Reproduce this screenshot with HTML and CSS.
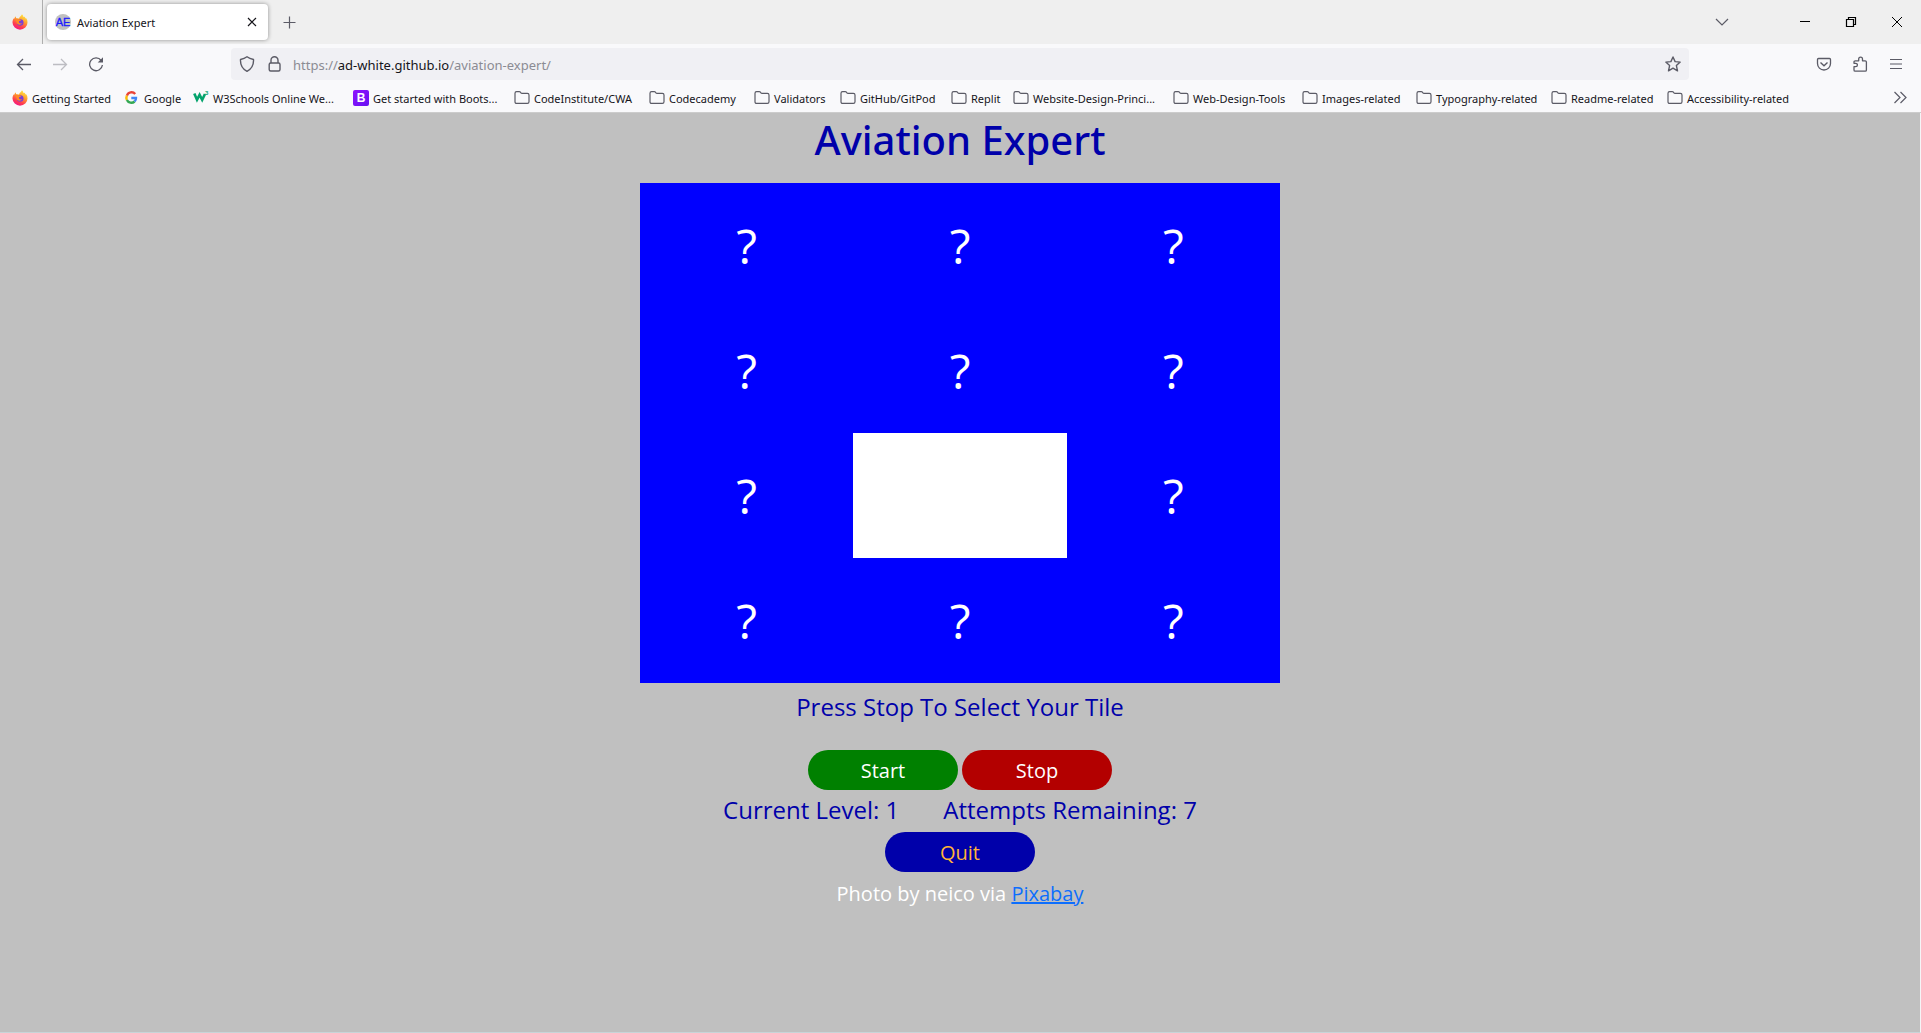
FILE: index.html
```html
<!DOCTYPE html>
<html lang="en">
<head>
<meta charset="utf-8">
<title>Aviation Expert</title>
<link rel="stylesheet" href="styles.css">
</head>
<body>
<svg class="defs" aria-hidden="true">
  <defs>
    <linearGradient id="flame" x1="0.8" y1="0" x2="0.3" y2="1">
      <stop offset="0" stop-color="#fff14a"/><stop offset="0.4" stop-color="#ffa02c"/><stop offset="0.75" stop-color="#ff3a50"/><stop offset="1" stop-color="#f0148c"/>
    </linearGradient>
    <linearGradient id="boot" x1="0" y1="0" x2="1" y2="1">
      <stop offset="0" stop-color="#9013fe"/><stop offset="1" stop-color="#6610f2"/>
    </linearGradient>
    <symbol id="firefox" viewBox="0 0 16 16">
      <path d="M10 0.3c.9.9 1.300 1.700 1.500 2.700l1.200-.3.800 1.600 1 .2c.7 1.200 1 2.500 1 3.900A7.500 7.300 0 0 1 8 15.700 7.500 7.300 0 0 1 .5 8.500c0-1.600.4-3 1.300-4.300L2 5.100 3.500 2.300 4.200 4.200 7 4.400C7.800 2.200 9.300 2.100 10 .3z" fill="url(#flame)"/>
      <circle cx="8.200" cy="8.500" r="3.300" fill="#7a3fd6"/>
      <path d="M3.300 5.200c1.500-.7 3-.5 4.300.4l1.600.3c-.4 1-1.400 1-2.200 1.300-.4 1.800 1 2.600 3.200 2-1.500 2.300-5.300 1.800-5.700-1.200z" fill="#ff8a25"/>
    </symbol>
    <symbol id="folder" viewBox="0 0 16 16">
      <path d="M1 3.200c0-1 .6-1.600 1.600-1.600h2.600c.5 0 .9.200 1.200.6l.7.900c.2.200.4.300.7.300h5.600c1 0 1.600.6 1.600 1.600v6.800c0 1-.6 1.600-1.600 1.600H2.600c-1 0-1.600-.6-1.600-1.600z" fill="none" stroke="#5b5b66" stroke-width="1.200"/>
    </symbol>
  </defs>
</svg>

<header class="browser">
  <div class="tabs">
    <div class="pinned"><svg class="icon" aria-label="Firefox"><use href="#firefox"/></svg></div>
    <div class="tab">
      <svg class="icon" viewBox="0 0 16 16"><circle cx="8" cy="8" r="8" fill="#c0c0c0"/><text x="8" y="12" text-anchor="middle" class="favicon-text">AE</text></svg>
      <span class="tab-title">Aviation Expert</span>
      <button class="plain" aria-label="Close tab"><svg class="icon" viewBox="0 0 16 16"><path d="M4 4l8 8M12 4l-8 8" stroke="#15141a" stroke-width="1.200"/></svg></button>
    </div>
    <button class="plain new-tab" aria-label="New tab"><svg class="icon" viewBox="0 0 16 16"><path d="M8.500 2.500v12M2.500 8.500h12" stroke="#5b5b66" stroke-width="1.200"/></svg></button>
    <div class="window-buttons">
      <button class="plain list-tabs" aria-label="List all tabs"><svg class="icon" viewBox="0 0 16 16"><path d="M2 5l6 6 6-6" fill="none" stroke="#5b5b66" stroke-width="1.200"/></svg></button>
      <button class="plain" aria-label="Minimize"><svg class="icon" viewBox="0 0 16 16"><path d="M3 7.500h10" stroke="#000"/></svg></button>
      <button class="plain" aria-label="Restore"><svg class="icon" viewBox="0 0 16 16"><path d="M3.500 5.500h7v7h-7zM5.500 5V3.500h7v7H11" fill="none" stroke="#000" stroke-width="1.200"/></svg></button>
      <button class="plain" aria-label="Close"><svg class="icon" viewBox="0 0 16 16"><path d="M3 3l10 10M13 3L3 13" stroke="#000"/></svg></button>
    </div>
  </div>

  <div class="nav">
    <div class="nav-left">
      <button class="plain" aria-label="Back"><svg class="icon" viewBox="0 0 16 16"><path d="M15 8.500H1.500M7 3L1.500 8.500 7 14" fill="none" stroke="#5b5b66" stroke-width="1.300"/></svg></button>
      <button class="plain" aria-label="Forward" disabled><svg class="icon" viewBox="0 0 16 16"><path d="M1 8.500h13.500M9 3l5.500 5.500L9 14" fill="none" stroke="#bdbdc2" stroke-width="1.300"/></svg></button>
      <button class="plain" aria-label="Reload"><svg class="icon" viewBox="0 0 16 16"><path d="M13.200 4.500A6.400 6.400 0 1 0 14.400 9" fill="none" stroke="#5b5b66" stroke-width="1.300"/><path d="M15 1.200v5.300H9.700z" fill="#5b5b66"/></svg></button>
    </div>
    <div class="address">
      <svg class="icon" viewBox="0 0 16 16"><path d="M8 .8c2 1.500 4 2.200 6.500 2.700C14.800 8.800 12.800 12.800 8 15.300 3.200 12.800 1.200 8.800 1.500 3.500 4 3 6 2.300 8 .8z" fill="none" stroke="#5b5b66" stroke-width="1.400" stroke-linejoin="round"/></svg>
      <svg class="icon" viewBox="0 0 16 16"><rect x="3.200" y="7" width="10.800" height="8" rx="1.500" fill="none" stroke="#5b5b66" stroke-width="1.400"/><path d="M5 7V4.200a3.500 3.500 0 0 1 7 0V7" fill="none" stroke="#5b5b66" stroke-width="1.400"/></svg>
      <span class="url">https://<b>ad-white.github.io</b>/aviation-expert/</span>
      <button class="plain" aria-label="Bookmark this page"><svg class="icon" viewBox="0 0 16 16"><path d="M8 1l2.100 4.600 5.100.5-3.800 3.500 1.100 5.200L8 12.200l-4.500 2.600 1.100-5.200L.8 6.100l5.100-.5z" fill="none" stroke="#5b5b66" stroke-width="1.400" stroke-linejoin="round"/></svg></button>
    </div>
    <div class="nav-right">
      <button class="plain" aria-label="Save to Pocket"><svg class="icon" viewBox="0 0 16 16"><path d="M2.500 2.500h11c.6 0 1 .4 1 1v4a6.500 6.500 0 0 1-13 0v-4c0-.6.4-1 1-1z" fill="none" stroke="#5b5b66" stroke-width="1.300"/><path d="M4.500 6.500L8 9.700l3.500-3.200" fill="none" stroke="#5b5b66" stroke-width="1.400"/></svg></button>
      <button class="plain" aria-label="Extensions"><svg class="icon" viewBox="0 0 16 16"><path d="M2 10.700V14c0 .8.400 1.200 1.200 1.200h10c.8 0 1.200-.4 1.200-1.200V6c0-.8-.4-1.200-1.200-1.200H10.500V3a1.900 1.900 0 0 0-3.800 0v1.800H3.200C2.400 4.800 2 5.200 2 6v1.300h1.700a1.700 1.700 0 0 1 0 3.400H2z" fill="none" stroke="#5b5b66" stroke-width="1.300" stroke-linejoin="round"/></svg></button>
      <button class="plain" aria-label="Menu"><svg class="icon" viewBox="0 0 16 16"><path d="M2 3.500h12M2 8h12M2 12.500h12" stroke="#5b5b66" stroke-width="1.200"/></svg></button>
    </div>
  </div>

  <nav class="bookmarks" aria-label="Bookmarks">
    <a href="#"><svg class="icon"><use href="#firefox"/></svg>Getting Started</a>
    <a href="#"><svg class="icon" viewBox="0 0 16 16" fill="none" stroke-width="2.400"><path d="M11.200 4A4.900 4.900 0 0 0 2.900 5.600" stroke="#ea4335"/><path d="M2.900 5.600a4.900 4.900 0 0 0 0 4.400" stroke="#fbbc05"/><path d="M2.900 10a4.900 4.900 0 0 0 7.700 1.500" stroke="#34a853"/><path d="M10.600 11.500A4.700 4.700 0 0 0 12 8H7.300" stroke="#4285f4"/></svg>Google</a>
    <a href="#"><svg class="icon" viewBox="0 0 16 16"><path d="M1.300 3.500L4 9.800l2.600-5 2.600 5L12 4" fill="none" stroke="#04a36c" stroke-width="2.600"/><text x="12" y="5" class="super-text">3</text></svg>W3Schools Online We...</a>
    <a href="#"><svg class="icon" viewBox="0 0 16 16"><rect width="16" height="16" rx="2" fill="url(#boot)"/><text x="8" y="12" text-anchor="middle" class="boot-text">B</text></svg>Get started with Boots...</a>
    <a href="#"><svg class="icon"><use href="#folder"/></svg>CodeInstitute/CWA</a>
    <a href="#"><svg class="icon"><use href="#folder"/></svg>Codecademy</a>
    <a href="#"><svg class="icon"><use href="#folder"/></svg>Validators</a>
    <a href="#"><svg class="icon"><use href="#folder"/></svg>GitHub/GitPod</a>
    <a href="#"><svg class="icon"><use href="#folder"/></svg>Replit</a>
    <a href="#"><svg class="icon"><use href="#folder"/></svg>Website-Design-Princi...</a>
    <a href="#"><svg class="icon"><use href="#folder"/></svg>Web-Design-Tools</a>
    <a href="#"><svg class="icon"><use href="#folder"/></svg>Images-related</a>
    <a href="#"><svg class="icon"><use href="#folder"/></svg>Typography-related</a>
    <a href="#"><svg class="icon"><use href="#folder"/></svg>Readme-related</a>
    <a href="#"><svg class="icon"><use href="#folder"/></svg>Accessibility-related</a>
    <button class="plain" aria-label="More bookmarks"><svg class="icon" viewBox="0 0 16 16"><path d="M2.500 2l5.500 5.500L2.500 13M8.500 2L14 7.500 8.500 13" fill="none" stroke="#5b5b66" stroke-width="1.200"/></svg></button>
  </nav>
</header>

<main class="game">
  <h1>Aviation Expert</h1>
  <div class="board">
    <div class="tile">?</div><div class="tile">?</div><div class="tile">?</div>
    <div class="tile">?</div><div class="tile">?</div><div class="tile">?</div>
    <div class="tile">?</div><div class="tile active"></div><div class="tile">?</div>
    <div class="tile">?</div><div class="tile">?</div><div class="tile">?</div>
  </div>
  <p class="message">Press Stop To Select Your Tile</p>
  <div class="controls">
    <button class="pill start">Start</button>
    <button class="pill stop">Stop</button>
  </div>
  <div class="stats"><span>Current Level: 1</span><span>Attempts Remaining: 7</span></div>
  <button class="pill quit">Quit</button>
  <p class="credit">Photo by neico via <a href="#">Pixabay</a></p>
</main>
</body>
</html>
```
FILE: styles.css
```css
* { box-sizing: border-box; }

body {
  margin: 0;
  min-height: 100vh;
  display: flex;
  flex-direction: column;
  background: #c0c0c0;
  font-family: "Open Sans", "Noto Sans", sans-serif;
}

.defs { position: absolute; width: 0; height: 0; }
.icon { display: block; width: 16px; height: 16px; flex: none; }

.plain {
  display: block;
  padding: 0;
  border: 0;
  background: none;
}

/* Browser chrome */
.browser {
  background: #f9f9fb;
  border-bottom: 1px solid #cccccc;
  color: #15141a;
  font-family: "Noto Sans", sans-serif;
  font-size: 11px;
}

.tabs {
  display: flex;
  align-items: center;
  height: 44px;
  background: #efefef;
}

.pinned {
  display: flex;
  align-items: center;
  width: 43px;
  height: 100%;
  padding-left: 12px;
  border-right: 1px solid #aeaeae;
}

.tab {
  display: flex;
  align-items: center;
  gap: 6px;
  width: 221px;
  height: 36px;
  margin-left: 4px;
  padding: 0 8px;
  border-radius: 4px;
  background: #ffffff;
  box-shadow: 0 0 4px rgba(0, 0, 0, 0.4);
}

.tab-title { flex: 1; }
.favicon-text { font: 11px "Liberation Sans", sans-serif; fill: #1a1aff; stroke: #1a1aff; stroke-width: 0.3; }
.super-text { font: bold 6px "Liberation Sans", sans-serif; fill: #04a36c; }
.boot-text { font: bold 12px "Liberation Sans", sans-serif; fill: #ffffff; }
.new-tab { margin-left: 13px; }

.window-buttons {
  display: flex;
  gap: 30px;
  margin-left: auto;
  padding-right: 16px;
}

.list-tabs { margin-right: 37px; }

.nav {
  display: flex;
  align-items: center;
  height: 40px;
}

.nav-left {
  display: flex;
  gap: 20px;
  width: 231px;
  padding-left: 16px;
}

.address {
  display: flex;
  flex: 1;
  align-items: center;
  gap: 11px;
  height: 32px;
  padding: 0 8px;
  border-radius: 4px;
  background: #f0f0f4;
}

.url { flex: 1; padding-top: 2px; font-size: 13px; color: #8b8b93; }
.url b { font-weight: 400; color: #15141a; }

.nav-right {
  display: flex;
  justify-content: flex-end;
  gap: 20px;
  width: 232px;
  padding-right: 17px;
}

.bookmarks {
  display: grid;
  grid-template-columns: 112px 69px 160px 161px 135px 105px 86px 111px 62px 160px 129px 114px 135px 116px 1fr auto;
  align-items: center;
  height: 28px;
  padding: 0 13px 0 12px;
}

.bookmarks a {
  display: flex;
  align-items: center;
  gap: 4px;
  color: inherit;
  text-decoration: none;
  white-space: nowrap;
}

/* Game page */
.game {
  display: flex;
  flex: 1;
  flex-direction: column;
  align-items: center;
  border-right: 1px solid #f4f5f7;
  border-bottom: 1px solid #c8d4d8;
  color: #0000aa;
}

h1 {
  margin: 3px 0 19px;
  font-family: "Noto Sans", sans-serif;
  font-size: 40px;
  font-weight: 500;
  line-height: 48px;
}

.board {
  display: grid;
  grid-template-columns: repeat(3, 1fr);
  grid-auto-rows: 125px;
  width: 100%;
  max-width: 640px;
  background: #0000ff;
}

.tile {
  display: flex;
  align-items: center;
  justify-content: center;
  color: #ffffff;
  font-size: 48px;
}

.active { background: #ffffff; }

.message, .stats { font-size: 24px; line-height: 36px; }
.message { margin: 6px 0 25px; }

.controls { display: flex; gap: 4px; }

.pill {
  width: 150px;
  height: 40px;
  padding: 0;
  border: 0;
  border-radius: 20px;
  color: #ffffff;
  font-family: inherit;
  font-size: 20px;
}

.start { background: #008000; }
.stop { background: #b30000; }
.quit { background: #0000aa; color: #ffb338; }

.stats { display: flex; gap: 44px; margin: 2px 0 4px; }

.credit {
  margin: 7px 0;
  color: #ffffff;
  font-size: 20px;
  line-height: 30px;
}

.credit a { color: #0d6efd; }
```
